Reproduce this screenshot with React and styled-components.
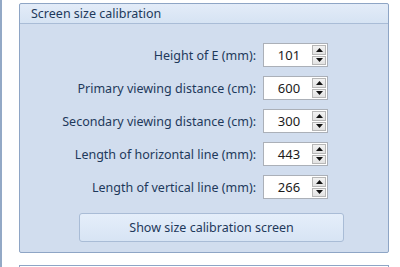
import React from "react";
import styled, { createGlobalStyle } from "styled-components";

const Global = createGlobalStyle`
  html, body { margin: 0; padding: 0; background: #ffffff; }
  body { font-family: "Noto Sans", "Open Sans", sans-serif; }
`;

const Page = styled.div`
  width: 400px;
  height: 267px;
  box-sizing: border-box;
  border-left: 2px solid #93a9c6;
  padding: 3px 11px 0 17px;
  display: flex;
  flex-direction: column;
  gap: 12px;
  overflow: hidden;
`;

const Group = styled.section`
  border: 1px solid #8ea5c5;
  border-radius: 2px;
  background: #d1ddee;
  display: flex;
  flex-direction: column;
`;

const Header = styled.div`
  height: 19px;
  border-bottom: 1px solid #a9bcd6;
  background: linear-gradient(#e3ecf8, #d6e3f3);
  color: #1e395b;
  font-size: 12.5px;
  line-height: 19px;
  padding-left: 11px;
  border-radius: 2px 2px 0 0;
`;

const Body = styled.div`
  padding: 19px 0 10px 0;
  display: flex;
  flex-direction: column;
`;

const Rows = styled.div`
  display: grid;
  grid-template-columns: 236px 65px;
  column-gap: 7px;
  row-gap: 9px;
  align-items: center;
`;

const Label = styled.label`
  text-align: right;
  color: #1e395b;
  font-size: 12.5px;
  white-space: nowrap;
`;

const Spin = styled.div`
  height: 24px;
  box-sizing: border-box;
  border: 1px solid #abb0b8;
  background: #ffffff;
  display: flex;
  align-items: stretch;
  padding: 1px 1px 1px 0;
`;

const Value = styled.div`
  flex: 1;
  text-align: center;
  font-size: 13px;
  line-height: 20px;
  color: #1b1b1b;
  padding-left: 2px;
`;

const Buttons = styled.div`
  width: 14px;
  display: flex;
  flex-direction: column;
  gap: 1px;
`;

const Arrow = styled.div`
  flex: 1;
  box-sizing: border-box;
  border: 1px solid #b7b7b7;
  background: linear-gradient(#f2f2f2, #e2e2e2);
  display: flex;
  align-items: center;
  justify-content: center;
`;

const Action = styled.button`
  margin: 14px 0 0 59px;
  width: 265px;
  height: 29px;
  border: 1px solid #a9bcd6;
  border-radius: 3px;
  background: linear-gradient(#e5eefa, #d7e4f4);
  color: #1e395b;
  font-family: inherit;
  font-size: 12.5px;
  padding: 0;
`;

const NextGroup = styled.div`
  border: 1px solid #8ea5c5;
  border-bottom: none;
  height: 10px;
  background: #ffffff;
`;

const Tri = ({ down }) => (
  <svg width="7" height="4" viewBox="0 0 7 4">
    {down ? <path d="M0 0H7L3.5 4Z" fill="#111" /> : <path d="M0 4H7L3.5 0Z" fill="#111" />}
  </svg>
);

const fields = [
  ["Height of E (mm):", "101"],
  ["Primary viewing distance (cm):", "600"],
  ["Secondary viewing distance (cm):", "300"],
  ["Length of horizontal line (mm):", "443"],
  ["Length of vertical line (mm):", "266"],
];

export default function App() {
  return (
    <>
      <Global />
      <Page>
        <Group>
          <Header>Screen size calibration</Header>
          <Body>
            <Rows>
              {fields.map(([label, value]) => (
                <React.Fragment key={label}>
                  <Label>{label}</Label>
                  <Spin>
                    <Value>{value}</Value>
                    <Buttons>
                      <Arrow><Tri /></Arrow>
                      <Arrow><Tri down /></Arrow>
                    </Buttons>
                  </Spin>
                </React.Fragment>
              ))}
            </Rows>
            <Action>Show size calibration screen</Action>
          </Body>
        </Group>
        <NextGroup />
      </Page>
    </>
  );
}
